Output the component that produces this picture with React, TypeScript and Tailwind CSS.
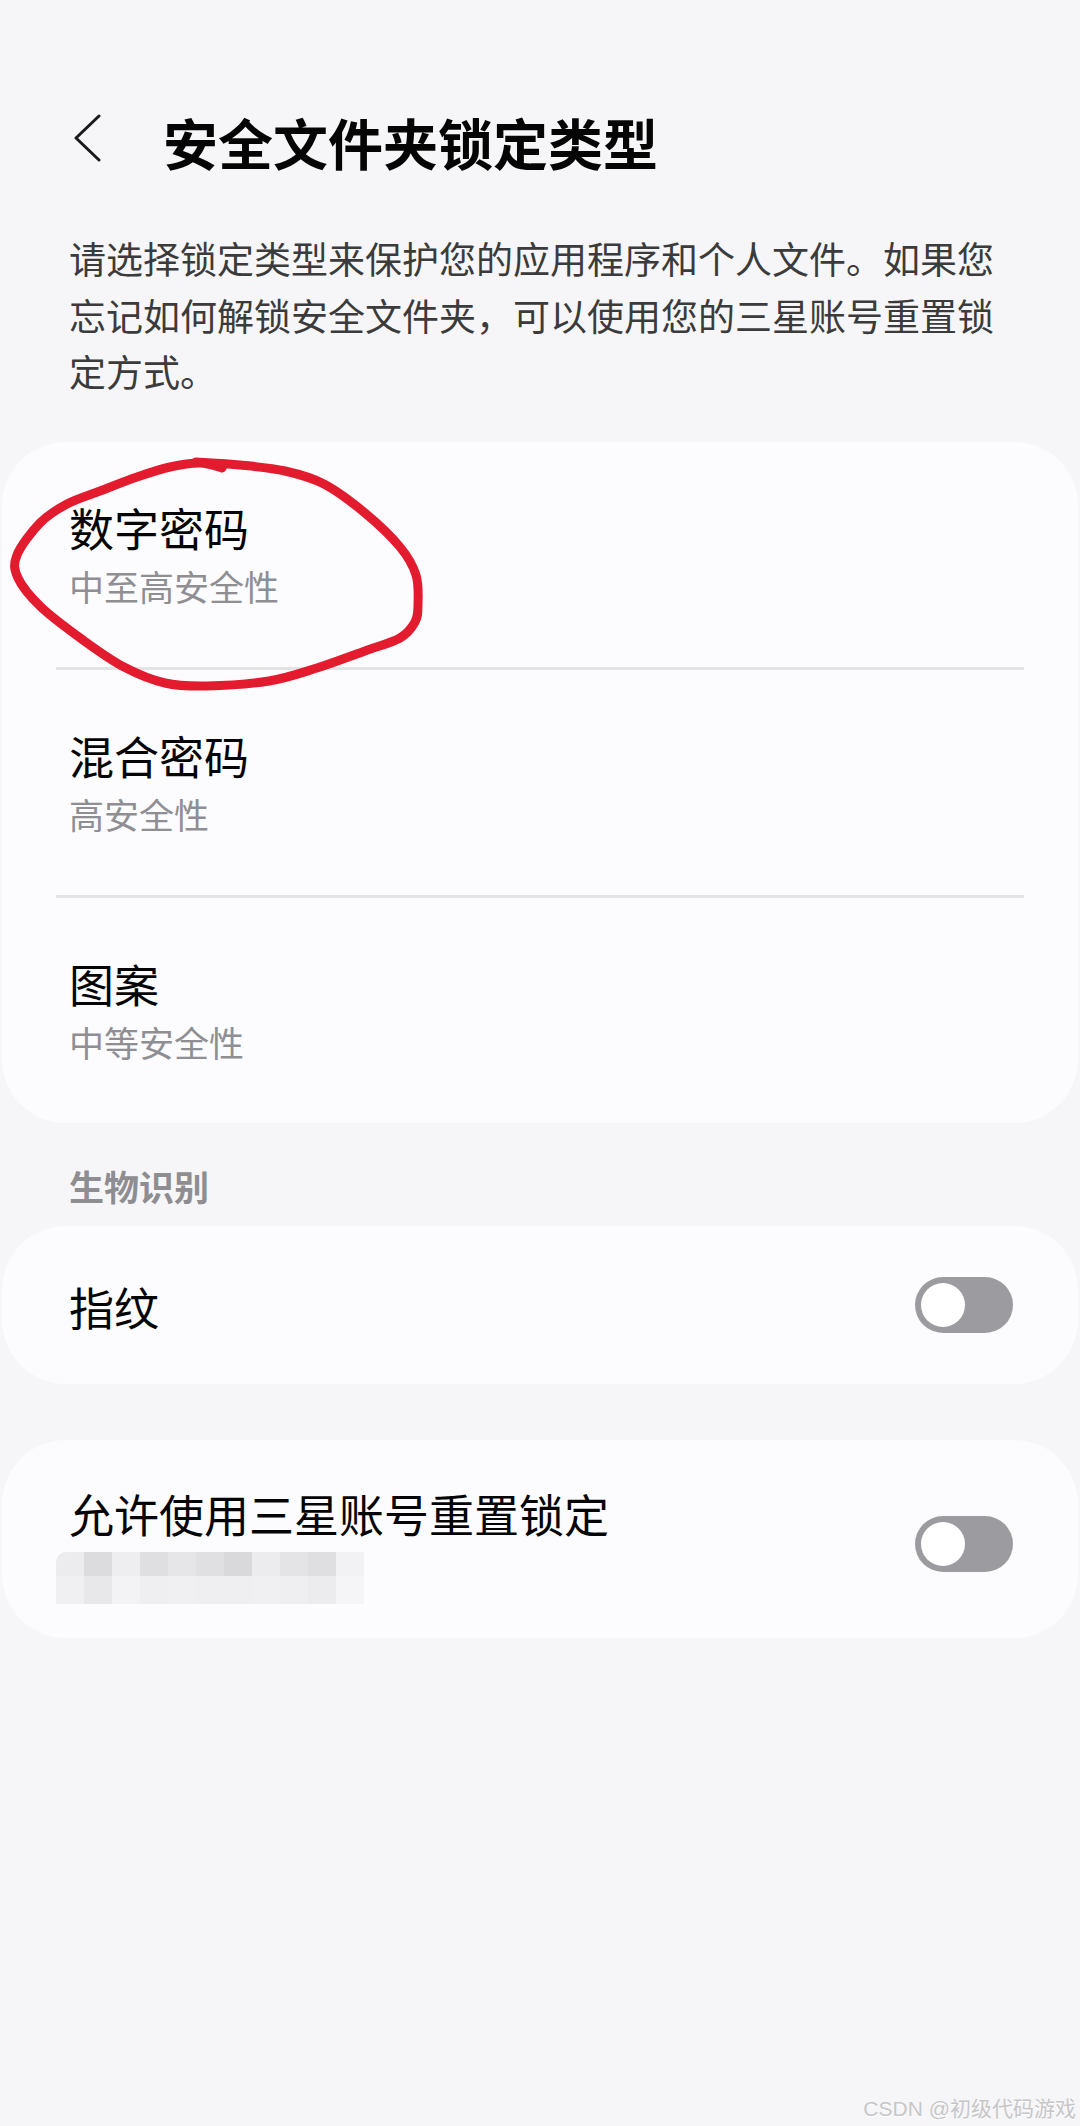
import type { ReactNode } from 'react'

// 手绘红圈的点 (整页坐标)
const circlePts: [number, number][] = [
    [196, 462], [240, 465], [285, 471], [324, 484], [365, 513], [400, 547], [416, 575], [418, 605],
    [415, 622], [400, 638], [365, 651], [317, 668], [269, 681], [207, 686], [165, 683], [124, 667],
    [83, 640], [41, 607], [18, 578], [17, 555], [40, 523], [67, 504], [100, 491], [137, 477],
    [170, 467], [200, 463], [222, 468],
]

function smoothPath(p: [number, number][]) {
    let d = `M${p[0][0]},${p[0][1]}`
    for (let i = 0; i < p.length - 1; i++) {
        const p0 = p[i - 1] || p[i]
        const p1 = p[i]
        const p2 = p[i + 1]
        const p3 = p[i + 2] || p2
        const c1x = p1[0] + (p2[0] - p0[0]) / 6
        const c1y = p1[1] + (p2[1] - p0[1]) / 6
        const c2x = p2[0] - (p3[0] - p1[0]) / 6
        const c2y = p2[1] - (p3[1] - p1[1]) / 6
        d += ` C${c1x},${c1y} ${c2x},${c2y} ${p2[0]},${p2[1]}`
    }
    return d
}

// 马赛克遮挡色块
const mosaicTop = ['#ececee', '#dcdcde', '#eeeef0', '#dfdfe1', '#e6e6e8', '#e0e0e2', '#d9d9db', '#ececee', '#e4e4e6', '#dfdfe1', '#f2f2f4']
const mosaicBottom = ['#f0f0f2', '#e8e8ea', '#f3f3f5', '#efeff1', '#f0f0f2', '#efeff1', '#efeff1', '#f0f0f2', '#efeff1', '#ececee', '#f5f5f7']

function Toggle() {
    return (
        <div className="w-[98px] h-[56px] rounded-full bg-[#9c9ca0] flex items-center pl-[6px] shrink-0">
            <div className="w-[44px] h-[44px] rounded-full bg-white" />
        </div>
    )
}

function Card({ children, className = '' }: { children: ReactNode; className?: string }) {
    return <div className={`mx-[2px] rounded-[64px] bg-[#fcfcfe] ${className}`}>{children}</div>
}

function LockItem({ title, sub }: { title: string; sub: string }) {
    return (
        <div className="pl-[67px] pt-[57px] pb-[55px] flex flex-col">
            <span className="text-[45px] leading-[58px] text-[#050505]">{title}</span>
            <span className="mt-[3px] text-[35px] leading-[52px] text-[#8f8f93]">{sub}</span>
        </div>
    )
}

const Divider = () => <div className="mx-[54px] h-[3px] bg-[#e4e4e6]" />

export default function App() {
    return (
        <div className="relative min-h-[2126px] bg-[#f6f6f8] flex flex-col font-['Noto_Sans_CJK_SC',sans-serif]">
            {/* Header */}
            <div className="mt-[108px] h-[66px] flex items-center pl-[74px]">
                <svg width="28" height="48" viewBox="0 0 28 48" className="mb-[6px]" fill="none">
                    <path d="M25 2 L2 24 L25 46" stroke="#1a1a1a" strokeWidth="3" strokeLinecap="round" strokeLinejoin="round" />
                </svg>
                <h1 className="ml-[61px] text-[55px] leading-[66px] font-bold text-[#050505]">安全文件夹锁定类型</h1>
            </div>

            <p className="mt-[56px] px-[69px] text-[37px] leading-[56.5px] text-[#3b3b3b]">
                请选择锁定类型来保护您的应用程序和个人文件。如果您忘记如何解锁安全文件夹，可以使用您的三星账号重置锁定方式。
            </p>

            {/* Lock types */}
            <Card className="mt-[42px]">
                <LockItem title="数字密码" sub="中至高安全性" />
                <Divider />
                <LockItem title="混合密码" sub="高安全性" />
                <Divider />
                <LockItem title="图案" sub="中等安全性" />
            </Card>

            <div className="mt-[39px] px-[69px] text-[35px] leading-[48px] font-bold text-[#8e8e92]">生物识别</div>

            <Card className="mt-[16px] h-[158px] flex items-center justify-between pl-[67px] pr-[65px]">
                <span className="text-[45px] leading-[58px] text-[#050505] pt-[4px]">指纹</span>
                <Toggle />
            </Card>

            <Card className="mt-[56px] pt-[45px] pb-[34px] flex items-center justify-between pl-[67px] pr-[65px]">
                <div className="flex flex-col">
                    <span className="text-[45px] leading-[58px] text-[#050505]">允许使用三星账号重置锁定</span>
                    <div className="mt-[9px] -ml-[13px] flex flex-col">
                        <div className="flex h-[24px] rounded-t-[10px] overflow-hidden">
                            {mosaicTop.map((c, i) => (
                                <div key={i} className="w-[28px] h-full" style={{ backgroundColor: c }} />
                            ))}
                        </div>
                        <div className="flex h-[28px]">
                            {mosaicBottom.map((c, i) => (
                                <div key={i} className="w-[28px] h-full" style={{ backgroundColor: c }} />
                            ))}
                        </div>
                    </div>
                </div>
                <Toggle />
            </Card>

            {/* Watermark */}
            <div className="mt-auto self-end pr-[4px] pb-[6px] text-[21px] leading-[22px] text-[#c6c6c8] font-['Liberation_Sans','Noto_Sans_CJK_SC',sans-serif] [text-shadow:0_1px_0_#ffffff]">
                CSDN @初级代码游戏
            </div>

            {/* Red hand-drawn annotation */}
            <svg className="absolute left-0 top-0 pointer-events-none" width="1080" height="2126" viewBox="0 0 1080 2126" fill="none">
                <path d={smoothPath(circlePts)} stroke="#e31b2e" strokeWidth="9" strokeLinecap="round" strokeLinejoin="round" />
            </svg>
        </div>
    )
}
